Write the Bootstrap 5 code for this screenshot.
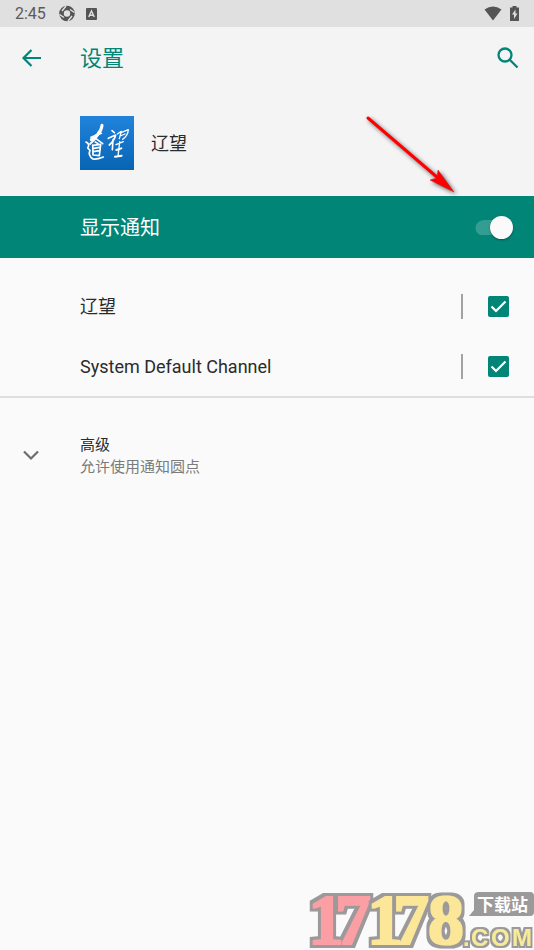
<!DOCTYPE html>
<html lang="zh-CN">
<head>
<meta charset="utf-8">
<meta name="viewport" content="width=device-width, initial-scale=1">
<title>设置</title>
<link href="https://cdn.jsdelivr.net/npm/bootstrap@5.3.0/dist/css/bootstrap.min.css" rel="stylesheet">
<style>
:root { --teal: #008577; }
body { font-family: Roboto, "Noto Sans CJK SC", sans-serif; background: #fafafa; color: #2b2b2b; }
.status { height: 27px; padding: 0 15px; background: #e0e0e0; color: #5a5a5a; font-size: 16px; line-height: 27px; }
.top-area { background: #f4f4f4; }
.toolbar { height: 62px; padding: 0 12px 0 20px; }
.toolbar svg, .status svg { display: block; }
.icon-btn { color: var(--teal); border: 0; background: none; padding: 0; }
.indent { padding-left: 80px; }
.screen-title { font-size: 22px; line-height: 32px; color: var(--teal); margin: 0 0 0 36px; padding-top: 2px; font-weight: 400; }
.app-head { height: 107px; gap: 17px; }
.item-text { font-size: 18px; line-height: 24px; padding-top: 2px; }
.master { min-height: 62px; padding-right: 21px; background: var(--teal); color: #fff; }
.master label { font-size: 20px; line-height: 28px; padding-top: 2px; }
.master .form-check-input { width: 38px; height: 23px; margin: 0; border: 0; border-radius: 12px; display: flex; justify-content: flex-end; background-color: transparent; background-repeat: no-repeat; background-image: radial-gradient(circle at 8px 8px, #339d92 7px, transparent 8px), linear-gradient(#339d92, #339d92); background-size: 15px 15px, 20px 15px; background-position: 0 4px, 8px 4px; }
.master .form-check-input:not(:checked) { justify-content: flex-start; }
.master .form-check-input::after { content: ""; width: 23px; height: 23px; border-radius: 50%; background: #fafafa; box-shadow: 0 1px 2px rgba(0,0,0,.35); }
.channels { padding-top: 18px; border-bottom: 2px solid #dedede; }
.channel { min-height: 60px; padding-right: 25px; }
.channel .vr { width: 2px; height: 25px; background: #8c8c8c; opacity: .8; margin-right: 25px; align-self: center; }
.channel .form-check-input { width: 21px; height: 21px; margin: 0; border-radius: 2px; border: 0; }
.channel .form-check-input:checked { background-color: var(--teal); background-size: 21px; background-image: url("data:image/svg+xml,%3csvg xmlns='http://www.w3.org/2000/svg' viewBox='0 0 21 21'%3e%3cpath fill='none' stroke='%23fff' stroke-width='2.2' d='M3.500 10.500l4.500 4.500L17.500 5.500'/%3e%3c/svg%3e"); }
.advanced { padding: 36px 0 0 20px; border: 0; background: none; text-align: left; gap: 38px; color: #2b2b2b; }
.adv-title { font-size: 15px; line-height: 22px; }
.adv-sub { font-size: 15px; line-height: 22px; color: #7b7b7b; }
.pointer { position: absolute; top: 110px; right: 74px; pointer-events: none; }
.watermark { position: absolute; right: 0; bottom: 0; }
</style>
<script src="https://cdn.jsdelivr.net/npm/bootstrap@5.3.0/dist/js/bootstrap.bundle.min.js"></script>
</head>
<body class="position-relative min-vh-100 d-flex flex-column">
<div class="top-area">
  <div class="status d-flex align-items-center">
    <span>2:45</span>
    <svg class="ms-2" width="24" height="17" viewBox="0 0 24 17" aria-hidden="true"><circle cx="13" cy="8.500" r="5.500" fill="none" stroke="#555" stroke-width="4.600"/><path d="M12 1L8 6M20.500 7.500L16 4.500M14 16l4-5M5.500 9.500l4.500 3" stroke="#e0e0e0" stroke-width="1.500"/></svg>
    <svg class="ms-2" width="11" height="12" viewBox="0 0 11 12" aria-hidden="true"><rect width="11" height="12" rx="1" fill="#555"/><path d="M2.700 9L5.500 3l2.800 6M4 7.300h3" fill="none" stroke="#e0e0e0" stroke-width="1.400"/></svg>
    <svg class="ms-auto" width="18" height="15" viewBox="0 0 18 15" aria-hidden="true"><path d="M.5 3.500Q9-2.500 17.500 3.500L9 14.500z" fill="#555"/></svg>
    <svg class="ms-2" width="9" height="16" viewBox="0 0 9 16" aria-hidden="true"><path d="M2.500 0h4v1.500H9V15H0V1.500h2.500z" fill="#555"/><path d="M5.500 3.500L2 8.500h2V13l3.500-5.500H5.500z" fill="#e0e0e0"/></svg>
  </div>
  <header class="toolbar d-flex align-items-center">
    <button class="icon-btn" aria-label="返回"><svg width="24" height="24" viewBox="0 0 24 24" fill="none" stroke="currentColor" stroke-width="2.200"><path d="M21 12H4M11.500 4L3.500 12l8 8"/></svg></button>
    <h1 class="screen-title">设置</h1>
    <button class="icon-btn ms-auto" aria-label="搜索"><svg width="28" height="28" viewBox="0 0 28 28" fill="none" stroke="currentColor" stroke-width="2.300"><circle cx="11" cy="11" r="6.500"/><path d="M15.500 15.500l8 8"/></svg></button>
  </header>
  <div class="app-head indent d-flex align-items-center">
    <svg width="54" height="54" viewBox="0 0 162 162" role="img" aria-label="辽望"><defs><linearGradient id="sky" x2="0" y2="1"><stop stop-color="#2183dc"/><stop offset="1" stop-color="#0864b3"/></linearGradient></defs><rect width="162" height="162" fill="url(#sky)"/>
      <g fill="none" stroke="#fff" stroke-width="5" stroke-linecap="round" stroke-linejoin="round"><path d="M66 28Q65 42 53 55L34 71" stroke-width="9"/><path d="M57 53Q44 73 30 84" stroke-width="6"/><path d="M33 64L64 52M48 68L68 83M18 78Q31 84 23 96L30 103Q23 118 39 129Q50 131 70 123"/><path d="M38 87L39 117L58 119L62 85L40 88M41 97L59 94M40 107L58 104M46 78l8 5"/><path d="M96 44l7 6M85 67L107 57Q103 74 88 87M99 71L97 101"/><path d="M112 54L124 46L118 68M123 50L145 41Q144 58 128 70M120 60l15-6M108 86L130 77M119 77L114 121" stroke-width="4"/><path d="M109 102L124 97M105 122L125 119" stroke-width="6"/></g></svg>
    <span class="item-text">辽望</span>
  </div>
</div>
<main>
  <div class="master indent d-flex align-items-center justify-content-between">
    <label for="show">显示通知</label><input class="form-check-input" type="checkbox" role="switch" id="show" checked>
  </div>
  <section class="channels">
    <div class="channel indent d-flex align-items-center"><label class="item-text me-auto" for="c1">辽望</label><span class="vr"></span><input class="form-check-input" type="checkbox" id="c1" checked></div>
    <div class="channel indent d-flex align-items-center"><label class="item-text me-auto" for="c2">System Default Channel</label><span class="vr"></span><input class="form-check-input" type="checkbox" id="c2" checked></div>
  </section>
  <button class="advanced d-flex align-items-center w-100">
    <svg width="22" height="22" viewBox="0 0 22 22" fill="none" stroke="#6c6c6c" stroke-width="2.200" aria-hidden="true"><path d="M4 6.500l7 7 7-7"/></svg>
    <span><span class="adv-title d-block">高级</span><span class="adv-sub d-block">允许使用通知圆点</span></span>
  </button>
</main>
<svg class="pointer" width="100" height="90" viewBox="360 110 100 90" aria-hidden="true"><g style="filter:drop-shadow(2px 2px 2px #0009)"><path d="M368 118L438 178" stroke="#f00" stroke-width="3" stroke-linecap="round"/><path d="M454 192L430 180L437 178L438 170z" fill="#f00" stroke="#b22" stroke-width=".5"/></g></svg>
<svg class="watermark" width="226" height="62" viewBox="308 888 226 62" overflow="visible" role="img" aria-label="17178.com 下载站">
  <defs>
    <filter id="bold" x="-10%" y="-20%" width="120%" height="140%"><feMorphology in="SourceAlpha" operator="dilate" radius="4" result="o"/><feFlood flood-color="#9b9999"/><feComposite in2="o" operator="in" result="g"/><feMorphology in="SourceGraphic" operator="dilate" radius="1" result="f"/><feMerge><feMergeNode in="g"/><feMergeNode in="f"/></feMerge></filter>
    <filter id="rim" x="-10%" y="-20%" width="120%" height="140%"><feMorphology in="SourceAlpha" operator="dilate" radius="2" result="o"/><feFlood flood-color="#9b9999"/><feComposite in2="o" operator="in" result="g"/><feMerge><feMergeNode in="g"/><feMergeNode in="SourceGraphic"/></feMerge></filter>
  </defs>
  <g font-family="Liberation Serif" font-weight="700" font-size="72"><text y="944" x="308 335" fill="#fb9fa5" filter="url(#bold)">17</text><text y="944" x="367 393 428" fill="#fbe797" filter="url(#bold)">178</text></g>
  <path d="M479 892h51q4 0 4 4v16q0 4-4 4h-61l5-6v-14q0-4 5-4" fill="#9b9999"/>
  <text x="477" y="911" font-family="Noto Sans CJK SC" font-weight="700" font-size="17" fill="#fff">下载站</text>
  <text x="463 471 491 512" y="946" font-family="Liberation Sans" font-weight="700" font-size="24" fill="#f7eb97" filter="url(#rim)">.COM</text>
</svg>
</body>
</html>
